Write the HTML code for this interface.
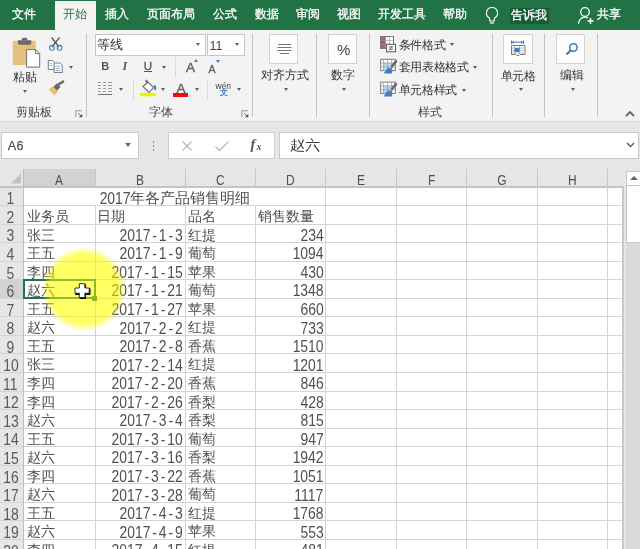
<!DOCTYPE html><html><head><meta charset="utf-8"><style>
*{margin:0;padding:0;box-sizing:border-box}
html,body{width:640px;height:549px;overflow:hidden;background:#e6e6e6;font-family:"Liberation Sans",sans-serif;color:#262626}
.ab{position:absolute}
.t{position:absolute;white-space:nowrap;line-height:1}
.tab{position:absolute;top:-1px;height:30px;color:#fff;font-size:12px;line-height:30px;white-space:nowrap;-webkit-text-stroke:0.3px currentColor}
.sep{position:absolute;width:1px;background:#c2c2c2}
.arr{position:absolute;width:0;height:0;border-left:2.5px solid transparent;border-right:2.5px solid transparent;border-top:3px solid #5f5f5f}
.lbl{position:absolute;font-size:12px;line-height:1;white-space:nowrap;color:#444}
.cell{position:absolute;font-size:15px;line-height:1;white-space:nowrap;color:#505050}
.cell b{font-weight:normal;font-size:14px}
.sx{display:inline-block;font-size:16px;transform:scaleX(.87);transform-origin:100% 50%}
.sx i{font-style:normal;margin:0 2.2px}
.rh{position:absolute;font-size:15px;line-height:1;white-space:nowrap;color:#5a5a5a;text-align:center;width:21.5px;left:0}
.ch{position:absolute;font-size:15px;line-height:1;white-space:nowrap;color:#505050;text-align:center;top:171.5px}
</style></head><body>
<div class="ab" style="left:0;top:0;width:640px;height:30px;background:#217346"></div>
<div class="ab" style="left:55px;top:1px;width:41px;height:29px;background:#f3f3f3"></div>
<div class="tab" style="left:12px;color:#fff">文件</div>
<div class="tab" style="left:62px;color:#217346;-webkit-text-stroke:0;left:62.5px">开始</div>
<div class="tab" style="left:105px;color:#fff">插入</div>
<div class="tab" style="left:147px;color:#fff">页面布局</div>
<div class="tab" style="left:212.5px;color:#fff">公式</div>
<div class="tab" style="left:254.5px;color:#fff">数据</div>
<div class="tab" style="left:295.5px;color:#fff">审阅</div>
<div class="tab" style="left:337px;color:#fff">视图</div>
<div class="tab" style="left:377.5px;color:#fff">开发工具</div>
<div class="tab" style="left:442.5px;color:#fff">帮助</div>
<div class="ab" style="left:510px;top:8px;width:39px;height:16px;background:#1a5c38"></div>
<div class="tab" style="left:511px;top:0">告诉我</div>
<svg class="ab" style="left:484px;top:6px" width="16" height="19" viewBox="0 0 16 19"><path d="M8 1.5a5.5 5.5 0 0 0-3.2 10c.6.5 1 1.2 1 2v1.5h4.4V13.5c0-.8.4-1.5 1-2A5.5 5.5 0 0 0 8 1.5z" fill="none" stroke="#fff" stroke-width="1.1"/><path d="M6 17h4" stroke="#fff" stroke-width="1.2"/></svg>
<svg class="ab" style="left:577px;top:6px" width="18" height="19" viewBox="0 0 18 19"><circle cx="8" cy="6" r="4.3" fill="none" stroke="#fff" stroke-width="1.3"/><path d="M1.5 18c0-4 2.8-6.8 6.5-6.8 1.2 0 2.2.3 3 .8" fill="none" stroke="#fff" stroke-width="1.3"/><path d="M13.5 12v6M10.5 15h6" stroke="#fff" stroke-width="1.4"/></svg>
<div class="tab" style="left:597px">共享</div>
<div class="ab" style="left:0;top:30px;width:640px;height:92px;background:#f3f3f3;border-bottom:1px solid #d5d5d5"></div>
<div class="sep" style="left:86px;top:34px;height:83px"></div>
<div class="sep" style="left:252px;top:34px;height:83px"></div>
<div class="sep" style="left:316px;top:34px;height:83px"></div>
<div class="sep" style="left:369px;top:34px;height:83px"></div>
<div class="sep" style="left:492px;top:34px;height:83px"></div>
<div class="sep" style="left:544px;top:34px;height:83px"></div>
<div class="sep" style="left:597px;top:34px;height:83px"></div>
<div class="lbl" style="left:16px;top:106px">剪贴板</div>
<div class="lbl" style="left:149px;top:106px">字体</div>
<div class="lbl" style="left:418px;top:106px">样式</div>
<svg class="ab" style="left:75px;top:110px" width="8" height="8" viewBox="0 0 8 8"><path d="M.8 7V.8h6" fill="none" stroke="#8a8a8a" stroke-width="0.9"/><path d="M3.2 3.2l3 3" stroke="#6a6a6a" stroke-width="1"/><path d="M7.3 3.8v3.5h-3.5z" fill="#5a5a5a"/></svg>
<svg class="ab" style="left:241px;top:110px" width="8" height="8" viewBox="0 0 8 8"><path d="M.8 7V.8h6" fill="none" stroke="#8a8a8a" stroke-width="0.9"/><path d="M3.2 3.2l3 3" stroke="#6a6a6a" stroke-width="1"/><path d="M7.3 3.8v3.5h-3.5z" fill="#5a5a5a"/></svg>
<div class="lbl" style="left:13px;top:71px;color:#333">粘贴</div>
<div class="arr" style="left:23px;top:90px"></div>
<div class="arr" style="left:69px;top:66px"></div>
<div class="ab" style="left:95px;top:33.5px;width:111px;height:22px;background:#fff;border:1px solid #c6c6c6"></div>
<div class="ab" style="left:206.5px;top:33.5px;width:38.5px;height:22px;background:#fff;border:1px solid #c6c6c6"></div>
<div class="t" style="left:97px;top:38.5px;font-size:12.5px;color:#333">等线</div>
<div class="t" style="left:209.5px;top:39.5px;font-size:12.5px;color:#444">11</div>
<div class="arr" style="left:196px;top:43px"></div>
<div class="arr" style="left:235px;top:43px"></div>
<div class="t" style="left:101.3px;top:60.7px;font-size:11px;font-weight:bold;color:#555">B</div>
<div class="t" style="left:122.5px;top:59.5px;font-size:12px;font-style:italic;font-weight:bold;font-family:'Liberation Serif',serif;color:#555">I</div>
<div class="t" style="left:143.8px;top:60.5px;font-size:11.5px;color:#555;-webkit-text-stroke:0.3px #555">U</div>
<div class="ab" style="left:143.8px;top:70.7px;width:8.2px;height:1.2px;background:#555"></div>
<div class="arr" style="left:162px;top:66px"></div>
<div class="sep" style="left:175px;top:57px;height:20px;background:#dadada"></div>
<div class="t" style="left:186px;top:61px;font-size:13.5px;color:#606060;-webkit-text-stroke:0.35px #606060">A</div>
<div class="t" style="left:208.5px;top:63.5px;font-size:10.5px;color:#606060;-webkit-text-stroke:0.35px #606060">A</div>
<div class="ab" style="left:194px;top:58.5px;width:0;height:0;border-left:2.5px solid transparent;border-right:2.5px solid transparent;border-bottom:3px solid #3e7fc1"></div>
<div class="ab" style="left:215.5px;top:59.5px;width:0;height:0;border-left:2.5px solid transparent;border-right:2.5px solid transparent;border-top:3px solid #3e7fc1"></div>
<div class="ab" style="left:98px;top:81.5px;width:2.5px;height:1px;background:#9a9a9a"></div>
<div class="ab" style="left:102.5px;top:81.5px;width:3.0px;height:1px;background:#9a9a9a"></div>
<div class="ab" style="left:108px;top:81.5px;width:3.5px;height:1px;background:#9a9a9a"></div>
<div class="ab" style="left:98px;top:84.5px;width:2.5px;height:1px;background:#9a9a9a"></div>
<div class="ab" style="left:102.5px;top:84.5px;width:3.0px;height:1px;background:#9a9a9a"></div>
<div class="ab" style="left:108px;top:84.5px;width:3.5px;height:1px;background:#9a9a9a"></div>
<div class="ab" style="left:98px;top:87.5px;width:2.5px;height:1px;background:#9a9a9a"></div>
<div class="ab" style="left:102.5px;top:87.5px;width:3.0px;height:1px;background:#9a9a9a"></div>
<div class="ab" style="left:108px;top:87.5px;width:3.5px;height:1px;background:#9a9a9a"></div>
<div class="ab" style="left:98px;top:90.5px;width:2.5px;height:1px;background:#9a9a9a"></div>
<div class="ab" style="left:102.5px;top:90.5px;width:3.0px;height:1px;background:#9a9a9a"></div>
<div class="ab" style="left:108px;top:90.5px;width:3.5px;height:1px;background:#9a9a9a"></div>
<div class="ab" style="left:98px;top:94px;width:14px;height:1.2px;background:#707070"></div>
<div class="arr" style="left:119px;top:88px"></div>
<div class="sep" style="left:132.5px;top:79px;height:21px;background:#dadada"></div>
<div class="arr" style="left:160.5px;top:88px"></div>
<div class="t" style="left:176.5px;top:82px;font-size:13.5px;color:#606060;-webkit-text-stroke:0.35px #606060">A</div>
<div class="ab" style="left:173px;top:93px;width:15px;height:3.5px;background:#e81010"></div>
<div class="arr" style="left:194.5px;top:88px"></div>
<div class="sep" style="left:207px;top:79px;height:21px;background:#dadada"></div>
<div class="t" style="left:215.5px;top:81.5px;font-size:8.5px;color:#444">wén</div>
<div class="t" style="left:219.5px;top:89px;font-size:8px;color:#2f6fb5;-webkit-text-stroke:0.2px #2f6fb5">文</div>
<div class="arr" style="left:236.5px;top:88px"></div>
<div class="ab" style="left:269px;top:34px;width:29px;height:30px;background:#fdfdfd;border:1px solid #d2d2d2"></div>
<div class="ab" style="left:327.5px;top:34px;width:29px;height:30px;background:#fdfdfd;border:1px solid #d2d2d2"></div>
<div class="ab" style="left:502.5px;top:34px;width:30px;height:30px;background:#fdfdfd;border:1px solid #d2d2d2"></div>
<div class="ab" style="left:556px;top:34px;width:29px;height:30px;background:#fdfdfd;border:1px solid #d2d2d2"></div>
<div class="t" style="left:337px;top:42px;font-size:15px;color:#444">%</div>
<div class="lbl" style="left:260.5px;top:69px;color:#333">对齐方式</div>
<div class="lbl" style="left:331px;top:69px;color:#333">数字</div>
<div class="arr" style="left:284px;top:88px"></div>
<div class="arr" style="left:342px;top:88px"></div>
<div class="lbl" style="left:398.5px;top:38.5px;color:#333;letter-spacing:-0.2px">条件格式</div>
<div class="lbl" style="left:398.5px;top:61px;color:#333;letter-spacing:-0.3px">套用表格格式</div>
<div class="lbl" style="left:398.5px;top:84px;color:#333;letter-spacing:-0.3px">单元格样式</div>
<div class="arr" style="left:449.5px;top:43px"></div>
<div class="arr" style="left:473px;top:66px"></div>
<div class="arr" style="left:461.5px;top:88.5px"></div>
<div class="lbl" style="left:500.5px;top:69.5px;color:#333;letter-spacing:-0.2px">单元格</div>
<div class="arr" style="left:518.5px;top:88px"></div>
<svg class="ab" style="left:564.5px;top:42px" width="14" height="14" viewBox="0 0 14 14">
<circle cx="8.5" cy="5.5" r="3.7" fill="none" stroke="#3e7fc1" stroke-width="1.6"/>
<path d="M5.8 8.2L1.5 12.5" stroke="#3e7fc1" stroke-width="2.2"/></svg>
<div class="lbl" style="left:560px;top:69px;color:#333">编辑</div>
<div class="arr" style="left:571px;top:88px"></div>
<svg class="ab" style="left:625px;top:110px" width="10" height="7" viewBox="0 0 10 7"><path d="M1 6l4-4 4 4" stroke="#666" stroke-width="1.8" fill="none"/></svg>
<div class="ab" style="left:1px;top:132px;width:138px;height:26.5px;background:#fff;border:1px solid #c8c8c8"></div>
<div class="t" style="left:7.8px;top:140px;font-size:12.5px;color:#505050;-webkit-text-stroke:0.25px #505050;letter-spacing:0.3px">A6</div>
<div class="ab" style="left:125px;top:142.5px;width:0;height:0;border-left:3.5px solid transparent;border-right:3.5px solid transparent;border-top:4px solid #6a6a6a"></div>
<div class="ab" style="left:152.5px;top:141px;width:1.5px;height:1.5px;background:#8a8a8a"></div>
<div class="ab" style="left:152.5px;top:145px;width:1.5px;height:1.5px;background:#8a8a8a"></div>
<div class="ab" style="left:152.5px;top:149px;width:1.5px;height:1.5px;background:#8a8a8a"></div>
<div class="ab" style="left:168px;top:132px;width:107px;height:26.5px;background:#fff;border:1px solid #cfcfcf"></div>
<svg class="ab" style="left:181px;top:140px" width="12" height="12" viewBox="0 0 12 12"><path d="M1.5 1.5l9 9M10.5 1.5l-9 9" stroke="#b8b8b8" stroke-width="1.3"/></svg>
<svg class="ab" style="left:214px;top:140px" width="16" height="12" viewBox="0 0 16 12"><path d="M1.5 6.5l4 4 9-9" stroke="#b8b8b8" stroke-width="1.3" fill="none"/></svg>
<div class="t" style="left:250.5px;top:137px;font-size:14.5px;font-style:italic;font-weight:bold;font-family:'Liberation Serif',serif;color:#555">f</div>
<div class="t" style="left:256.5px;top:142px;font-size:10px;font-style:italic;font-weight:bold;font-family:'Liberation Serif',serif;color:#555">x</div>
<div class="ab" style="left:278.5px;top:132px;width:360px;height:26.5px;background:#fff;border:1px solid #c8c8c8"></div>
<div class="t" style="left:290px;top:137.5px;font-size:15px;color:#3a3a3a;transform:scaleY(.92);transform-origin:0 0">赵六</div>
<svg class="ab" style="left:626px;top:142px" width="9" height="6" viewBox="0 0 9 6"><path d="M1 1l3.5 3.5L8 1" stroke="#555" stroke-width="1.3" fill="none"/></svg>
<div class="ab" style="left:24px;top:187px;width:599px;height:362px;background:#fff"></div>
<div class="ab" style="left:24px;top:169px;width:70.6px;height:17px;background:#d2d2d2"></div>
<div class="ab" style="left:24px;top:185.5px;width:70.6px;height:1.5px;background:#217346"></div>
<div class="ab" style="left:0;top:279.25px;width:24px;height:18.55px;background:#d2d2d2"></div>
<div class="ab" style="left:0;top:186px;width:623px;height:1.5px;background:#c4c4c4"></div>
<div class="ab" style="left:0;top:205.05px;width:623px;height:1px;background:#d4d4d4"></div>
<div class="ab" style="left:0;top:223.60px;width:623px;height:1px;background:#d4d4d4"></div>
<div class="ab" style="left:0;top:242.15px;width:623px;height:1px;background:#d4d4d4"></div>
<div class="ab" style="left:0;top:260.70px;width:623px;height:1px;background:#d4d4d4"></div>
<div class="ab" style="left:0;top:279.25px;width:623px;height:1px;background:#d4d4d4"></div>
<div class="ab" style="left:0;top:297.80px;width:623px;height:1px;background:#d4d4d4"></div>
<div class="ab" style="left:0;top:316.35px;width:623px;height:1px;background:#d4d4d4"></div>
<div class="ab" style="left:0;top:334.90px;width:623px;height:1px;background:#d4d4d4"></div>
<div class="ab" style="left:0;top:353.45px;width:623px;height:1px;background:#d4d4d4"></div>
<div class="ab" style="left:0;top:372.00px;width:623px;height:1px;background:#d4d4d4"></div>
<div class="ab" style="left:0;top:390.55px;width:623px;height:1px;background:#d4d4d4"></div>
<div class="ab" style="left:0;top:409.10px;width:623px;height:1px;background:#d4d4d4"></div>
<div class="ab" style="left:0;top:427.65px;width:623px;height:1px;background:#d4d4d4"></div>
<div class="ab" style="left:0;top:446.20px;width:623px;height:1px;background:#d4d4d4"></div>
<div class="ab" style="left:0;top:464.75px;width:623px;height:1px;background:#d4d4d4"></div>
<div class="ab" style="left:0;top:483.30px;width:623px;height:1px;background:#d4d4d4"></div>
<div class="ab" style="left:0;top:501.85px;width:623px;height:1px;background:#d4d4d4"></div>
<div class="ab" style="left:0;top:520.40px;width:623px;height:1px;background:#d4d4d4"></div>
<div class="ab" style="left:0;top:538.95px;width:623px;height:1px;background:#d4d4d4"></div>
<div class="ab" style="left:23px;top:169px;width:1px;height:380px;background:#bdbdbd"></div>
<div class="ab" style="left:95.00px;top:169px;width:1px;height:18px;background:#c8c8c8"></div>
<div class="ab" style="left:95.00px;top:205.05px;width:1px;height:400px;background:#d4d4d4"></div>
<div class="ab" style="left:185.00px;top:169px;width:1px;height:18px;background:#c8c8c8"></div>
<div class="ab" style="left:185.00px;top:205.05px;width:1px;height:400px;background:#d4d4d4"></div>
<div class="ab" style="left:255.40px;top:169px;width:1px;height:18px;background:#c8c8c8"></div>
<div class="ab" style="left:255.40px;top:205.05px;width:1px;height:400px;background:#d4d4d4"></div>
<div class="ab" style="left:325.00px;top:169px;width:1px;height:18px;background:#c8c8c8"></div>
<div class="ab" style="left:325.00px;top:187px;width:1px;height:400px;background:#d4d4d4"></div>
<div class="ab" style="left:396.40px;top:169px;width:1px;height:18px;background:#c8c8c8"></div>
<div class="ab" style="left:396.40px;top:187px;width:1px;height:400px;background:#d4d4d4"></div>
<div class="ab" style="left:466.00px;top:169px;width:1px;height:18px;background:#c8c8c8"></div>
<div class="ab" style="left:466.00px;top:187px;width:1px;height:400px;background:#d4d4d4"></div>
<div class="ab" style="left:537.00px;top:169px;width:1px;height:18px;background:#c8c8c8"></div>
<div class="ab" style="left:537.00px;top:187px;width:1px;height:400px;background:#d4d4d4"></div>
<div class="ab" style="left:607.00px;top:169px;width:1px;height:18px;background:#c8c8c8"></div>
<div class="ab" style="left:607.00px;top:187px;width:1px;height:400px;background:#d4d4d4"></div>
<div class="ab" style="left:622px;top:186px;width:2px;height:363px;background:#c6c6c6"></div>
<div class="ab" style="left:624px;top:169px;width:16px;height:380px;background:#e6e6e6"></div>
<div class="ab" style="left:626px;top:185px;width:14px;height:364px;background:#dadada"></div>
<div class="ab" style="left:626px;top:171px;width:20px;height:72px;background:#fff;border:1px solid #c6c6c6"></div>
<div class="ab" style="left:626px;top:185px;width:20px;height:1px;background:#c6c6c6"></div>
<div class="ab" style="left:630px;top:175.5px;width:0;height:0;border-left:4px solid transparent;border-right:4px solid transparent;border-bottom:4px solid #666"></div>
<svg class="ab" style="left:9px;top:172px" width="13" height="13" viewBox="0 0 13 13"><path d="M12 1.5V11.5H1.5z" fill="#c2c2c2"/></svg>
<div class="ch" style="left:24px;width:71px"><span style="display:inline-block;transform:scaleX(0.8)">A</span></div>
<div class="ch" style="left:95px;width:90px"><span style="display:inline-block;transform:scaleX(0.8)">B</span></div>
<div class="ch" style="left:185px;width:70.4px"><span style="display:inline-block;transform:scaleX(0.8)">C</span></div>
<div class="ch" style="left:255.4px;width:69.6px"><span style="display:inline-block;transform:scaleX(0.8)">D</span></div>
<div class="ch" style="left:325px;width:71.39999999999998px"><span style="display:inline-block;transform:scaleX(0.8)">E</span></div>
<div class="ch" style="left:396.4px;width:69.60000000000002px"><span style="display:inline-block;transform:scaleX(0.8)">F</span></div>
<div class="ch" style="left:466px;width:71px"><span style="display:inline-block;transform:scaleX(0.8)">G</span></div>
<div class="ch" style="left:537px;width:70px"><span style="display:inline-block;transform:scaleX(0.8)">H</span></div>
<div class="rh" style="top:191.30px"><span class="sx" style="transform-origin:50% 50%">1</span></div>
<div class="rh" style="top:209.85px"><span class="sx" style="transform-origin:50% 50%">2</span></div>
<div class="rh" style="top:228.40px"><span class="sx" style="transform-origin:50% 50%">3</span></div>
<div class="rh" style="top:246.95px"><span class="sx" style="transform-origin:50% 50%">4</span></div>
<div class="rh" style="top:265.50px"><span class="sx" style="transform-origin:50% 50%">5</span></div>
<div class="rh" style="top:284.05px"><span class="sx" style="transform-origin:50% 50%">6</span></div>
<div class="rh" style="top:302.60px"><span class="sx" style="transform-origin:50% 50%">7</span></div>
<div class="rh" style="top:321.15px"><span class="sx" style="transform-origin:50% 50%">8</span></div>
<div class="rh" style="top:339.70px"><span class="sx" style="transform-origin:50% 50%">9</span></div>
<div class="rh" style="top:358.25px"><span class="sx" style="transform-origin:50% 50%">10</span></div>
<div class="rh" style="top:376.80px"><span class="sx" style="transform-origin:50% 50%">11</span></div>
<div class="rh" style="top:395.35px"><span class="sx" style="transform-origin:50% 50%">12</span></div>
<div class="rh" style="top:413.90px"><span class="sx" style="transform-origin:50% 50%">13</span></div>
<div class="rh" style="top:432.45px"><span class="sx" style="transform-origin:50% 50%">14</span></div>
<div class="rh" style="top:451.00px"><span class="sx" style="transform-origin:50% 50%">15</span></div>
<div class="rh" style="top:469.55px"><span class="sx" style="transform-origin:50% 50%">16</span></div>
<div class="rh" style="top:488.10px"><span class="sx" style="transform-origin:50% 50%">17</span></div>
<div class="rh" style="top:506.65px"><span class="sx" style="transform-origin:50% 50%">18</span></div>
<div class="rh" style="top:525.20px"><span class="sx" style="transform-origin:50% 50%">19</span></div>
<div class="rh" style="top:543.75px"><span class="sx" style="transform-origin:50% 50%">20</span></div>
<div class="cell" style="left:24px;width:301.4px;text-align:center;top:189.5px"><span class="sx" style="margin-left:-4.6px;vertical-align:-1px">2017</span><b style="font-size:14.8px">年各产品销售明细</b></div>
<div class="cell" style="left:27px;top:208.05px"><b>业务员</b></div>
<div class="cell" style="left:97px;top:208.05px"><b>日期</b></div>
<div class="cell" style="left:257.5px;top:208.05px"><b>销售数量</b></div>
<div class="cell" style="left:187.5px;top:208.05px"><b>品名</b></div>
<div class="cell" style="left:27px;top:226.60px"><b>张三</b></div>
<div class="cell" style="left:94.6px;width:88.2px;text-align:right;top:227.80px"><span class="sx">2017<i>-</i>1<i>-</i>3</span></div>
<div class="cell" style="left:255.5px;width:68px;text-align:right;top:227.80px"><span class="sx">234</span></div>
<div class="cell" style="left:187.5px;top:226.60px"><b>红提</b></div>
<div class="cell" style="left:27px;top:245.15px"><b>王五</b></div>
<div class="cell" style="left:94.6px;width:88.2px;text-align:right;top:246.35px"><span class="sx">2017<i>-</i>1<i>-</i>9</span></div>
<div class="cell" style="left:255.5px;width:68px;text-align:right;top:246.35px"><span class="sx">1094</span></div>
<div class="cell" style="left:187.5px;top:245.15px"><b>葡萄</b></div>
<div class="cell" style="left:27px;top:263.70px"><b>李四</b></div>
<div class="cell" style="left:94.6px;width:88.2px;text-align:right;top:264.90px"><span class="sx">2017<i>-</i>1<i>-</i>15</span></div>
<div class="cell" style="left:255.5px;width:68px;text-align:right;top:264.90px"><span class="sx">430</span></div>
<div class="cell" style="left:187.5px;top:263.70px"><b>苹果</b></div>
<div class="cell" style="left:27px;top:282.25px"><b>赵六</b></div>
<div class="cell" style="left:94.6px;width:88.2px;text-align:right;top:283.45px"><span class="sx">2017<i>-</i>1<i>-</i>21</span></div>
<div class="cell" style="left:255.5px;width:68px;text-align:right;top:283.45px"><span class="sx">1348</span></div>
<div class="cell" style="left:187.5px;top:282.25px"><b>葡萄</b></div>
<div class="cell" style="left:27px;top:300.80px"><b>王五</b></div>
<div class="cell" style="left:94.6px;width:88.2px;text-align:right;top:302.00px"><span class="sx">2017<i>-</i>1<i>-</i>27</span></div>
<div class="cell" style="left:255.5px;width:68px;text-align:right;top:302.00px"><span class="sx">660</span></div>
<div class="cell" style="left:187.5px;top:300.80px"><b>苹果</b></div>
<div class="cell" style="left:27px;top:319.35px"><b>赵六</b></div>
<div class="cell" style="left:94.6px;width:88.2px;text-align:right;top:320.55px"><span class="sx">2017<i>-</i>2<i>-</i>2</span></div>
<div class="cell" style="left:255.5px;width:68px;text-align:right;top:320.55px"><span class="sx">733</span></div>
<div class="cell" style="left:187.5px;top:319.35px"><b>红提</b></div>
<div class="cell" style="left:27px;top:337.90px"><b>王五</b></div>
<div class="cell" style="left:94.6px;width:88.2px;text-align:right;top:339.10px"><span class="sx">2017<i>-</i>2<i>-</i>8</span></div>
<div class="cell" style="left:255.5px;width:68px;text-align:right;top:339.10px"><span class="sx">1510</span></div>
<div class="cell" style="left:187.5px;top:337.90px"><b>香蕉</b></div>
<div class="cell" style="left:27px;top:356.45px"><b>张三</b></div>
<div class="cell" style="left:94.6px;width:88.2px;text-align:right;top:357.65px"><span class="sx">2017<i>-</i>2<i>-</i>14</span></div>
<div class="cell" style="left:255.5px;width:68px;text-align:right;top:357.65px"><span class="sx">1201</span></div>
<div class="cell" style="left:187.5px;top:356.45px"><b>红提</b></div>
<div class="cell" style="left:27px;top:375.00px"><b>李四</b></div>
<div class="cell" style="left:94.6px;width:88.2px;text-align:right;top:376.20px"><span class="sx">2017<i>-</i>2<i>-</i>20</span></div>
<div class="cell" style="left:255.5px;width:68px;text-align:right;top:376.20px"><span class="sx">846</span></div>
<div class="cell" style="left:187.5px;top:375.00px"><b>香蕉</b></div>
<div class="cell" style="left:27px;top:393.55px"><b>李四</b></div>
<div class="cell" style="left:94.6px;width:88.2px;text-align:right;top:394.75px"><span class="sx">2017<i>-</i>2<i>-</i>26</span></div>
<div class="cell" style="left:255.5px;width:68px;text-align:right;top:394.75px"><span class="sx">428</span></div>
<div class="cell" style="left:187.5px;top:393.55px"><b>香梨</b></div>
<div class="cell" style="left:27px;top:412.10px"><b>赵六</b></div>
<div class="cell" style="left:94.6px;width:88.2px;text-align:right;top:413.30px"><span class="sx">2017<i>-</i>3<i>-</i>4</span></div>
<div class="cell" style="left:255.5px;width:68px;text-align:right;top:413.30px"><span class="sx">815</span></div>
<div class="cell" style="left:187.5px;top:412.10px"><b>香梨</b></div>
<div class="cell" style="left:27px;top:430.65px"><b>王五</b></div>
<div class="cell" style="left:94.6px;width:88.2px;text-align:right;top:431.85px"><span class="sx">2017<i>-</i>3<i>-</i>10</span></div>
<div class="cell" style="left:255.5px;width:68px;text-align:right;top:431.85px"><span class="sx">947</span></div>
<div class="cell" style="left:187.5px;top:430.65px"><b>葡萄</b></div>
<div class="cell" style="left:27px;top:449.20px"><b>赵六</b></div>
<div class="cell" style="left:94.6px;width:88.2px;text-align:right;top:450.40px"><span class="sx">2017<i>-</i>3<i>-</i>16</span></div>
<div class="cell" style="left:255.5px;width:68px;text-align:right;top:450.40px"><span class="sx">1942</span></div>
<div class="cell" style="left:187.5px;top:449.20px"><b>香梨</b></div>
<div class="cell" style="left:27px;top:467.75px"><b>李四</b></div>
<div class="cell" style="left:94.6px;width:88.2px;text-align:right;top:468.95px"><span class="sx">2017<i>-</i>3<i>-</i>22</span></div>
<div class="cell" style="left:255.5px;width:68px;text-align:right;top:468.95px"><span class="sx">1051</span></div>
<div class="cell" style="left:187.5px;top:467.75px"><b>香蕉</b></div>
<div class="cell" style="left:27px;top:486.30px"><b>赵六</b></div>
<div class="cell" style="left:94.6px;width:88.2px;text-align:right;top:487.50px"><span class="sx">2017<i>-</i>3<i>-</i>28</span></div>
<div class="cell" style="left:255.5px;width:68px;text-align:right;top:487.50px"><span class="sx">1117</span></div>
<div class="cell" style="left:187.5px;top:486.30px"><b>葡萄</b></div>
<div class="cell" style="left:27px;top:504.85px"><b>王五</b></div>
<div class="cell" style="left:94.6px;width:88.2px;text-align:right;top:506.05px"><span class="sx">2017<i>-</i>4<i>-</i>3</span></div>
<div class="cell" style="left:255.5px;width:68px;text-align:right;top:506.05px"><span class="sx">1768</span></div>
<div class="cell" style="left:187.5px;top:504.85px"><b>红提</b></div>
<div class="cell" style="left:27px;top:523.40px"><b>赵六</b></div>
<div class="cell" style="left:94.6px;width:88.2px;text-align:right;top:524.60px"><span class="sx">2017<i>-</i>4<i>-</i>9</span></div>
<div class="cell" style="left:255.5px;width:68px;text-align:right;top:524.60px"><span class="sx">553</span></div>
<div class="cell" style="left:187.5px;top:523.40px"><b>苹果</b></div>
<div class="cell" style="left:27px;top:541.95px"><b>李四</b></div>
<div class="cell" style="left:94.6px;width:88.2px;text-align:right;top:543.15px"><span class="sx">2017<i>-</i>4<i>-</i>15</span></div>
<div class="cell" style="left:255.5px;width:68px;text-align:right;top:543.15px"><span class="sx">481</span></div>
<div class="cell" style="left:187.5px;top:541.95px"><b>红提</b></div>
<div class="ab" style="left:23px;top:278.75px;width:73px;height:20.55px;border:2px solid #217346"></div>
<div class="ab" style="left:92px;top:295.80px;width:5px;height:5px;background:#217346"></div>
<div class="ab" style="left:34px;top:239px;width:100px;height:100px;border-radius:50%;mix-blend-mode:multiply;background:radial-gradient(closest-side,rgba(255,255,70,.62) 0,rgba(255,255,70,.62) 68%,rgba(255,255,70,0) 84%)"></div>
<div class="ab" style="left:34px;top:239px;width:100px;height:100px;border-radius:50%;background:radial-gradient(closest-side,rgba(255,255,60,.5) 0,rgba(255,255,60,.5) 68%,rgba(255,255,60,0) 84%)"></div>
<svg class="ab" style="left:74px;top:282px" width="17" height="17" viewBox="0 0 17 17">
<path d="M6 2.5h5.5v4h4.5v6h-4.5v4h-5.5v-4H1.5v-6H6z" fill="#000" stroke="#000" stroke-width="1"/>
<path d="M5.3 1.7h5.6v4.3h4.3v5.2h-4.3v4.3H5.3v-4.3H1v-5.2h4.3z" fill="#fff" stroke="#222" stroke-width="0.9"/></svg>
<svg class="ab" style="left:0;top:0" width="640" height="130" viewBox="0 0 640 130"><path d="M12.75 42.3a1.5 1.5 0 0 1 1.5-1.5h20a1.5 1.5 0 0 1 1.5 1.5V65H12.75z" fill="#e8c07d"/><path d="M17.9 40.2h13.35v2.8a1.7 1.7 0 0 1-1.7 1.7h-9.95a1.7 1.7 0 0 1-1.7-1.7z" fill="#6a6a6a"/><path d="M21.7 40.4v-1a1.6 1.6 0 0 1 1.6-1.6h2.5a1.6 1.6 0 0 1 1.6 1.6v1z" fill="#6a6a6a"/><path d="M26.6 49.6h9.1l4 4v13.5h-13.1z" fill="#fff" stroke="#707070" stroke-width="1"/><path d="M35.6 49.6v4.1h4.1" fill="none" stroke="#707070" stroke-width="1"/><path d="M51.5 37.5l7.5 9.5M59.5 37.5l-7.5 9.5" stroke="#5a5a5a" stroke-width="1.3" fill="none"/><circle cx="51.9" cy="47.8" r="2.4" fill="none" stroke="#3e7fc1" stroke-width="1.1"/><circle cx="59.6" cy="47.8" r="2.4" fill="none" stroke="#3e7fc1" stroke-width="1.1"/><path d="M48.3 60.5h4.2l1.8 1.8v7.2h-6z" fill="#fff" stroke="#707070" stroke-width="0.9"/><path d="M54.1 63h6l2.2 2.2v7.3h-8.2z" fill="#fff" stroke="#707070" stroke-width="0.9"/><path d="M49.5 63.2h2.5M49.5 65.4h2.5M55.6 66.2h4.8M55.6 68.4h4.8M55.6 70.6h4.8" stroke="#5d93cc" stroke-width="0.7"/><path d="M48.5 89.5l4.8-3.6 4.9 4.9-3.6 4.8z" fill="#e8c07d"/><path d="M53.3 86.9l3.6-3.6 3.7 3.7-3.6 3.6z" fill="#6a6a6a"/><path d="M58.5 84.5l4.5-2.8" stroke="#6a6a6a" stroke-width="2.6" stroke-linecap="round"/><path d="M143 86.5l5-4.5 5.5 5.5-4.5 5z" fill="#fff" stroke="#6a6a6a" stroke-width="1.1"/><path d="M146.5 80.5v3.5" stroke="#6a6a6a" stroke-width="1"/><circle cx="146.5" cy="81" r="1" fill="none" stroke="#6a6a6a" stroke-width="0.8"/><path d="M154.2 85.5c1.3 1.2 1.5 3 .4 4.5" stroke="#3e7fc1" stroke-width="1.8" fill="none"/><rect x="140" y="92.9" width="15.5" height="3.4" fill="#f5ee00"/><path d="M278 44.5h13M277.5 47.5h14M277.5 50.5h14M280 53.5h9" stroke="#666" stroke-width="0.9"/><rect x="380.5" y="36.5" width="13" height="12" fill="#fff" stroke="#7a7a7a"/><path d="M385.5 37v11M389.5 37v11M381 40.5h12M381 44.5h12" stroke="#b0b0b0" stroke-width="0.8"/><rect x="381" y="37" width="4.5" height="3.5" fill="#e05a3a"/><rect x="381" y="40.5" width="4.5" height="4" fill="#3e7fc1"/><rect x="381" y="44.5" width="4.5" height="3.5" fill="#e05a3a"/><rect x="386.5" y="44.3" width="9" height="7.5" fill="#fff" stroke="#555"/><path d="M388.7 47h4.6M388.7 49.2h4.6M392.2 45.6l-2.4 5" stroke="#555" stroke-width="0.8"/><rect x="380.7" y="59.3" width="14.6" height="11.3" fill="#fff" stroke="#7a7a7a" stroke-width="1"/><rect x="383.6" y="63.099999999999994" width="8" height="7.5" fill="#bcd6f2"/><path d="M383.6 59.8v10.8M387.6 59.8v10.8M391.6 59.8v10.8M381.2 63.099999999999994h13.6M381.2 66.89999999999999h13.6" stroke="#9a9a9a" stroke-width="0.8"/><path d="M396 61.3l-4.6 5.6" stroke="#6a6a6a" stroke-width="2.6" stroke-linecap="round"/><path d="M390 67.8c1.2 .4 2.2 1.5 2.4 2.6l-.6 3.2H383.8c.8-1.6 2.4-4.2 3.6-5.2.8-.6 1.8-.8 2.6-.6z" fill="#3e7fc1"/><path d="M389.5 68.0l1.8-1.6" stroke="#fff" stroke-width="0.8"/><rect x="380.7" y="82.1" width="14.6" height="11.3" fill="#fff" stroke="#7a7a7a" stroke-width="1"/><rect x="383.6" y="85.89999999999999" width="8" height="7.5" fill="#bcd6f2"/><path d="M383.6 82.6v10.8M387.6 82.6v10.8M391.6 82.6v10.8M381.2 85.89999999999999h13.6M381.2 89.69999999999999h13.6" stroke="#9a9a9a" stroke-width="0.8"/><path d="M396 84.1l-4.6 5.6" stroke="#6a6a6a" stroke-width="2.6" stroke-linecap="round"/><path d="M390 90.6c1.2 .4 2.2 1.5 2.4 2.6l-.6 3.2H383.8c.8-1.6 2.4-4.2 3.6-5.2.8-.6 1.8-.8 2.6-.6z" fill="#3e7fc1"/><path d="M389.5 90.8l1.8-1.6" stroke="#fff" stroke-width="0.8"/><path d="M512 42.2h11" stroke="#3e7fc1" stroke-width="1"/><path d="M511.5 40.5v3.5M523.5 40.5v3.5" stroke="#3e7fc1" stroke-width="1"/><path d="M514 41l-1.6 1.2 1.6 1.2M521 41l1.6 1.2-1.6 1.2" stroke="#3e7fc1" stroke-width="0.9" fill="none"/><path d="M511.5 45.5h13.5v9h-5l-1 1h-2l-1-1h-4.5z" fill="#fff" stroke="#7a7a7a" stroke-width="1"/><path d="M512 48h12.5M512 50.5h12.5M512 53h12.5M514.5 46v8.5M519.5 46v8.5" stroke="#b0b0b0" stroke-width="0.8"/><rect x="514.5" y="48" width="5" height="4" fill="#3e7fc1"/></svg>
</body></html>
